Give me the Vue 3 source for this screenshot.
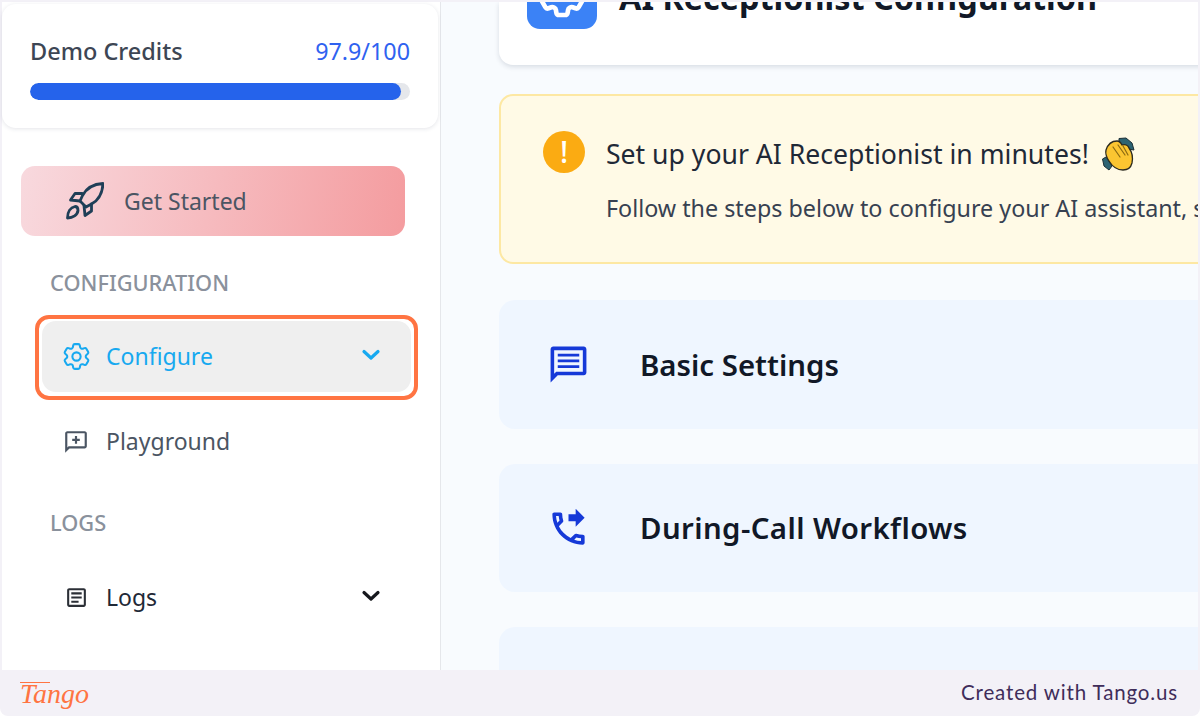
<script setup>
const cog = "M9.594 3.94c.09-.542.56-.94 1.11-.94h2.593c.55 0 1.02.398 1.11.94l.213 1.281c.063.374.313.686.645.87.074.04.147.083.22.127.325.196.72.257 1.075.124l1.217-.456a1.125 1.125 0 0 1 1.37.49l1.296 2.247a1.125 1.125 0 0 1-.26 1.431l-1.003.827c-.293.241-.438.613-.43.992a7.723 7.723 0 0 1 0 .255c-.008.378.137.75.43.991l1.004.827c.424.35.534.955.26 1.43l-1.298 2.247a1.125 1.125 0 0 1-1.369.491l-1.217-.456c-.355-.133-.75-.072-1.076.124a6.47 6.47 0 0 1-.22.128c-.331.183-.581.495-.644.869l-.213 1.281c-.09.543-.56.94-1.11.94h-2.594c-.55 0-1.019-.398-1.11-.94l-.213-1.281c-.062-.374-.312-.686-.644-.87a6.52 6.52 0 0 1-.22-.127c-.325-.196-.72-.257-1.076-.124l-1.217.456a1.125 1.125 0 0 1-1.369-.49l-1.297-2.247a1.125 1.125 0 0 1 .26-1.431l1.004-.827c.292-.24.437-.613.43-.991a6.932 6.932 0 0 1 0-.255c.007-.38-.138-.751-.43-.992l-1.004-.827a1.125 1.125 0 0 1-.26-1.43l1.297-2.247a1.125 1.125 0 0 1 1.37-.491l1.216.456c.356.133.751.072 1.076-.124.072-.044.146-.086.22-.128.332-.183.582-.495.644-.869l.214-1.28Z"
</script>

<template>
  <div class="frame">
    <div class="main">
      <aside class="sidebar">
        <section class="credits">
          <div class="credits-head">
            <span class="credits-name">Demo Credits</span>
            <span class="credits-num">97.9/100</span>
          </div>
          <div class="track"><div class="fill"></div></div>
        </section>

        <a class="start">
          <svg class="rocket" viewBox="0 0 38 38" fill="none" stroke="#1f3f57" stroke-width="2.8" stroke-linejoin="round" stroke-linecap="round">
            <path d="M37 1.500C28 2 20.500 6 16.500 13.500L14 19L20 25L25.500 22C33 18 36.500 10.500 37 1.500Z" />
            <path d="M16 11.500L9 11.500L4.500 18L14 19" />
            <path d="M25.500 22L25.500 29L19 33.500L18 23.500" />
            <path d="M9 24.500C4.500 25.500 1.500 30 1.500 36C7 36 11.500 33 12 28.500C12 26 11 24.500 9 24.500Z" />
          </svg>
          <span>Get Started</span>
        </a>

        <div class="label first">CONFIGURATION</div>

        <div class="row active">
          <span class="icon">
            <svg width="33" height="33" viewBox="0 0 24 24" fill="none" stroke="#17a9f0" stroke-width="1.5">
              <path :d="cog" />
              <circle cx="12" cy="12" r="3" />
            </svg>
          </span>
          <span class="row-text">Configure</span>
          <svg class="chev" width="20" height="12" viewBox="0 0 20 12" fill="none" stroke="#17a9f0" stroke-width="3.200" stroke-linecap="round" stroke-linejoin="round"><path d="M3 2.500L10 9L17 2.500" /></svg>
          <span class="highlight"></span>
        </div>

        <div class="row play">
          <span class="icon">
            <svg width="26" height="26" viewBox="0 0 24 24" fill="#4b5563">
              <path d="M20 2H4c-1.100 0-2 .9-2 2v18l4-4h14c1.100 0 2-.9 2-2V4c0-1.100-.9-2-2-2zm0 14H5.170L4 17.170V4h16v12z" />
              <path d="M13 6.500h-2V9H8.500v2H11v2.500h2V11h2.500V9H13z" />
            </svg>
          </span>
          <span class="row-text">Playground</span>
        </div>

        <div class="label second">LOGS</div>

        <div class="row logs">
          <span class="icon">
            <svg width="25" height="25" viewBox="0 0 24 24" fill="#2b2f36">
              <path d="M19 5v14H5V5h14m0-2H5c-1.100 0-2 .9-2 2v14c0 1.100.9 2 2 2h14c1.100 0 2-.9 2-2V5c0-1.100-.9-2-2-2z" />
              <path d="M14 17H7v-2h7v2zm3-4H7v-2h10v2zm0-4H7V7h10v2z" />
            </svg>
          </span>
          <span class="row-text">Logs</span>
          <svg class="chev" width="20" height="12" viewBox="0 0 20 12" fill="none" stroke="#16181d" stroke-width="3.200" stroke-linecap="round" stroke-linejoin="round"><path d="M3 2.500L10 9L17 2.500" /></svg>
        </div>
      </aside>

      <main class="content">
        <section class="header-card">
          <div class="header-icon">
            <svg width="56" height="56" viewBox="0 0 24 24" fill="none" stroke="#fff" stroke-width="2">
              <path :d="cog" />
            </svg>
          </div>
          <h1 class="header-title">AI Receptionist Configuration</h1>
        </section>

        <section class="notice">
          <div class="notice-icon">!</div>
          <div class="notice-body">
            <div class="notice-title">
              <span>Set up your AI Receptionist in minutes!</span>
              <svg class="clap" width="34" height="34" viewBox="0 0 34 34">
                <path d="M18 1.500L25 1L31 6L33 13L27 12L18 6Z" fill="#2d6372" stroke="#1c2f36" stroke-width="1" />
                <path d="M1.500 22L3 29L8 33L11 29L5 20Z" fill="#2d6372" stroke="#1c2f36" stroke-width="1" />
                <path d="M5 13C7 7 11 4 16 4C18 4 20 6 21 8C24 7 27 8 28 11C31 15 32 21 31 26C30 30 27 33 22 33C16 33 11 29 8 24C6 21 4 17 5 13Z" fill="#fbc531" stroke="#2b2a1f" stroke-width="1.300" />
                <path d="M12 10L19 20M17 8L24 18M22 9L27 18" fill="none" stroke="#8b6a12" stroke-width="1.200" stroke-linecap="round" />
              </svg>
            </div>
            <p class="notice-text">Follow the steps below to configure your AI assistant, simply work through each section</p>
          </div>
        </section>

        <section class="acc">
          <span class="acc-icon">
            <svg width="43" height="43" viewBox="0 0 24 24" fill="#1539d8">
              <path d="M20.500 2H3.500C2.700 2 2 2.700 2 3.500V22l4-4h14.500c.8 0 1.500-.7 1.500-1.500v-13C22 2.700 21.300 2 20.500 2zm-.5 14H5.170L4 17.170V4h16v12z" />
              <path d="M6 6h12v1.500H6zM6 9.200h12v1.500H6zM6 12.400h12v1.500H6z" />
            </svg>
          </span>
          <h2 class="acc-title">Basic Settings</h2>
        </section>

        <section class="acc second-acc">
          <span class="acc-icon">
            <svg width="43" height="43" viewBox="0 0 24 24" fill="#1539d8">
              <path d="M16 11l5-5-5-5v3h-4v4h4v3zm4 4.500c-1.250 0-2.450-.2-3.570-.57-.1-.03-.21-.05-.31-.05-.26 0-.51.1-.71.29l-2.200 2.200c-2.830-1.440-5.150-3.750-6.590-6.590l2.200-2.210c.28-.26.36-.65.25-1C8.700 6.450 8.500 5.250 8.500 4c0-.55-.45-1-1-1H4c-.55 0-1 .45-1 1 0 9.390 7.610 17 17 17 .55 0 1-.45 1-1v-3.500c0-.55-.45-1-1-1zM5.030 5h1.500c.07.89.22 1.760.46 2.590l-1.200 1.200c-.41-1.200-.67-2.470-.76-3.790zM19 18.970c-1.320-.09-2.590-.35-3.800-.75l1.190-1.190c.85.24 1.720.39 2.600.45v1.490z" />
            </svg>
          </span>
          <h2 class="acc-title wide">During-Call Workflows</h2>
        </section>

        <section class="acc third-acc"></section>
      </main>
    </div>

    <footer class="footer">
      <span class="logo">Tango</span>
      <span class="made">Created with Tango.us</span>
    </footer>
  </div>
</template>

<style>
html, body { margin: 0; background: #fff; }
</style>

<style scoped>
* { box-sizing: border-box; }
.frame {
  width: 1200px;
  height: 716px;
  display: flex;
  flex-direction: column;
  overflow: hidden;
  background: #fff;
  font-family: "Noto Sans", "Open Sans", sans-serif;
}
.main {
  height: 670px;
  flex: none;
  display: flex;
  padding: 2px 2px 0;
  background: #f3f1f7;
  overflow: hidden;
}
.sidebar {
  width: 439px;
  flex: none;
  background: #fff;
  border-right: 1px solid #e5e7eb;
  display: flex;
  flex-direction: column;
}
.credits {
  width: 436px;
  height: 124px;
  margin-top: 2px;
  flex: none;
  padding: 32px 28px 0;
  background: #fff;
  border-radius: 14px;
  box-shadow: 0 1px 4px rgba(30, 40, 70, .12);
}
.credits-head {
  display: flex;
  justify-content: space-between;
  align-items: center;
  height: 30px;
  font-size: 23.500px;
}
.credits-name { font-weight: 500; color: #3d4654; }
.credits-num { color: #2f62f0; font-size: 23.300px; }
.track {
  margin-top: 17px;
  height: 17px;
  border-radius: 9px;
  background: #e5e7eb;
  overflow: hidden;
}
.fill {
  width: 97.6%;
  height: 100%;
  border-radius: 9px;
  background: #2563eb;
}
.start {
  margin: 38px 0 0 19px;
  width: 384px;
  height: 70px;
  flex: none;
  display: flex;
  align-items: center;
  padding-left: 45px;
  gap: 20px;
  border-radius: 14px;
  background: linear-gradient(100deg, #f8d9de 0%, #f49c9f 100%);
  color: #4b5563;
  font-size: 23px;
}
.rocket { width: 38px; height: 38px; flex: none; }
.label {
  margin-left: 48px;
  height: 30px;
  line-height: 30px;
  font-size: 21.800px;
  font-weight: 500;
  color: #8a919c;
  flex: none;
}
.label.first { margin-top: 32px; }
.label.second { margin-top: 31px; }
.row {
  position: relative;
  margin-left: 40px;
  width: 369px;
  height: 71px;
  flex: none;
  display: flex;
  align-items: center;
  padding: 0 30px 0 20px;
  border-radius: 14px;
  font-size: 23px;
}
.row.active { margin-top: 23px; background: #efefef; color: #17a9f0; }
.row.play { margin-top: 14px; color: #4b5563; }
.row.logs { margin-top: 24px; color: #1f2937; }
.icon {
  width: 28px;
  height: 28px;
  flex: none;
  display: flex;
  align-items: center;
  justify-content: center;
}
.icon svg { flex: none; }
.row-text { margin-left: 16px; padding-bottom: 2px; flex: 1; }
.chev { flex: none; margin-top: -3px; }
.highlight {
  position: absolute;
  top: -6px;
  bottom: -8px;
  left: -7px;
  right: -7px;
  border: 4px solid #ff7442;
  border-radius: 14px;
  pointer-events: none;
}
.content {
  flex: 1;
  min-width: 0;
  padding-left: 58px;
  background: #f8fbfe;
  display: flex;
  flex-direction: column;
  overflow: hidden;
}
.header-card {
  position: relative;
  flex: none;
  height: 63px;
  margin-right: -20px;
  padding: 0 28px 36px;
  display: flex;
  align-items: flex-end;
  gap: 22px;
  background: #fff;
  border-radius: 0 0 14px 14px;
  box-shadow: 0 2px 5px rgba(30, 40, 70, .14);
}
.header-icon {
  width: 70px;
  height: 70px;
  flex: none;
  display: flex;
  align-items: center;
  justify-content: center;
  border-radius: 13px;
  background: #3b82f6;
}
.header-title {
  margin: 0 0 12px;
  font-size: 32.400px;
  line-height: 40px;
  font-weight: 700;
  color: #111827;
  white-space: nowrap;
}
.notice {
  flex: none;
  margin: 29px -20px 0 0;
  height: 170px;
  padding: 35px 0 0 42px;
  display: flex;
  gap: 21px;
  background: #fffae6;
  border: 2px solid #fde8a3;
  border-radius: 14px;
}
.notice-icon {
  width: 42px;
  height: 42px;
  flex: none;
  border-radius: 50%;
  background: #fbab12;
  color: #fff;
  font-size: 30px;
  line-height: 42px;
  text-align: center;
  font-weight: 500;
}
.notice-body { min-width: 0; color: #1f2937; white-space: nowrap; }
.notice-title {
  display: flex;
  align-items: center;
  gap: 12px;
  height: 36px;
  margin-top: 5px;
  font-size: 26.600px;
}
.clap { flex: none; }
.notice-text {
  margin: 18px 0 0;
  font-size: 23.300px;
  line-height: 36px;
  color: #374151;
}
.acc {
  flex: none;
  margin: 36px -20px 0 0;
  height: 129px;
  padding-left: 48px;
  display: flex;
  align-items: center;
  gap: 50px;
  background: #eff6ff;
  border-radius: 16px;
}
.second-acc { margin-top: 35px; height: 128px; }
.third-acc { margin-top: 35px; }
.acc-icon { width: 43px; height: 43px; flex: none; }
.acc-title {
  margin: 0;
  font-size: 29.400px;
  font-weight: 600;
  color: #111827;
  white-space: nowrap;
}
.acc-title.wide { letter-spacing: .4px; }
.footer {
  flex: 1;
  display: flex;
  align-items: center;
  justify-content: space-between;
  padding: 0 22px 2px 20px;
  background: #f3f1f7;
  border-radius: 0 0 8px 8px;
}
.logo {
  position: relative;
  font-family: "Liberation Serif", serif;
  font-style: italic;
  font-size: 28px;
  color: #ff7442;
  margin-top: 4px;
}
.logo::before {
  content: "";
  position: absolute;
  left: 0;
  top: 4px;
  width: 30px;
  height: 1px;
  background: #ff7442;
}
.made {
  font-family: "Lato", sans-serif;
  font-size: 20.500px;
  letter-spacing: .85px;
  color: #3f2d5a;
}
</style>
